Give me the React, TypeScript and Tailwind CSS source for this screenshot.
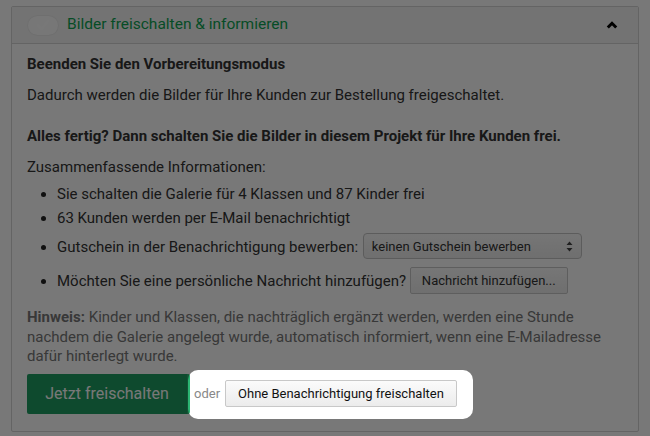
import React from 'react';

const App = () => {
  return (
    <div className="relative min-h-screen bg-white pt-[6px] px-[11px] font-['Roboto',_'Liberation_Sans',_sans-serif] text-[#333]">
      <div className="w-[628px] h-[426px] border border-[#d4d4d4] rounded-[2px] bg-white">
        <div className="flex items-center h-[37px] pl-[15px] pr-[20px] border-b border-[#d4d4d4] bg-[#f4f4f4]">
          <span className="flex items-center justify-center w-[32px] h-[21px] rounded-full bg-[#fcfcfc] shadow-[inset_0_0_0_1px_#ebebeb]">
            <svg width="14" height="12" viewBox="0 0 14 12" fill="none">
              <path d="M2 6.5 L5.5 10 L12 2" stroke="#ffffff" strokeWidth="2.6" strokeLinecap="round" strokeLinejoin="round" />
            </svg>
          </span>
          <span className="ml-[8px] text-[15.5px] text-[#0da352]">Bilder freischalten &amp; informieren</span>
          <svg className="ml-auto" width="12" height="8" viewBox="0 0 12 8" fill="none">
            <path d="M1.8 6.5 L6 2.3 L10.2 6.5" stroke="#000" strokeWidth="3" strokeLinejoin="miter" />
          </svg>
        </div>

        <div className="px-[15px] pt-[10px] text-[15px] leading-[20px]">
          <p className="font-bold">Beenden Sie den Vorbereitungsmodus</p>
          <p className="mt-[11px]">Dadurch werden die Bilder für Ihre Kunden zur Bestellung freigeschaltet.</p>
          <p className="mt-[21px] font-bold">Alles fertig? Dann schalten Sie die Bilder in diesem Projekt für Ihre Kunden frei.</p>
          <p className="mt-[11px]">Zusammenfassende Informationen:</p>
          <ul className="mt-[5px] pl-[30px] list-disc marker:text-[#222]">
            <li className="leading-[24px]">Sie schalten die Galerie für 4 Klassen und 87 Kinder frei</li>
            <li className="leading-[24px]">63 Kunden werden per E-Mail benachrichtigt</li>
            <li className="h-[35px] leading-[35px]">
              <span>Gutschein in der Benachrichtigung bewerben: </span>
              <span className="inline-flex items-center align-middle justify-between w-[219px] h-[26px] ml-[1px] px-[8px] rounded-[4px] border border-[#c4c4c4] bg-gradient-to-b from-[#fafafa] to-[#ececec] text-[13px] leading-none -mt-[4px]">
                keinen Gutschein bewerben
                <svg width="7" height="11" viewBox="0 0 7 11">
                  <path d="M3.5 0.5 L6.5 4 H0.5 Z M3.5 10.5 L0.5 7 H6.5 Z" fill="#444" />
                </svg>
              </span>
            </li>
            <li className="h-[33px] leading-[33px]">
              <span>Möchten Sie eine persönliche Nachricht hinzufügen? </span>
              <span className="inline-flex items-center align-middle h-[27px] ml-0 px-[11px] rounded-[2px] border border-[#c8c8c8] bg-gradient-to-b from-[#fbfbfb] to-[#ececec] text-[13px] leading-none -mt-[3px]">
                Nachricht hinzufügen...
              </span>
            </li>
          </ul>
          <p className="mt-[10px] text-[#777] leading-[19.5px]">
            <b>Hinweis:</b> Kinder und Klassen, die nachträglich ergänzt werden, werden eine Stunde nachdem die Galerie angelegt wurde, automatisch informiert, wenn eine E-Mailadresse dafür hinterlegt wurde.
          </p>
          <div className="mt-[7px] flex items-center">
            <button className="w-[163px] h-[40px] rounded-[2px] bg-[#1f9e63] border-r-[3px] border-[#2cb573] text-white text-[16px]">
              Jetzt freischalten
            </button>
            <span className="relative flex items-center">
              <span className="absolute -left-[2px] -right-[16px] -top-[10px] -bottom-[12px] rounded-[10px] shadow-[0_0_0_2000px_rgba(0,0,0,0.53)] pointer-events-none" />
              <span className="ml-[4px] text-[13px] text-[#888]">oder</span>
              <button className="ml-[5px] h-[27px] px-[12px] rounded-[2px] border border-[#c8c8c8] bg-gradient-to-b from-[#fbfbfb] to-[#ececec] text-[13px] text-[#111]">
                Ohne Benachrichtigung freischalten
              </button>
            </span>
          </div>
        </div>
      </div>
    </div>
  );
};

export default App;
